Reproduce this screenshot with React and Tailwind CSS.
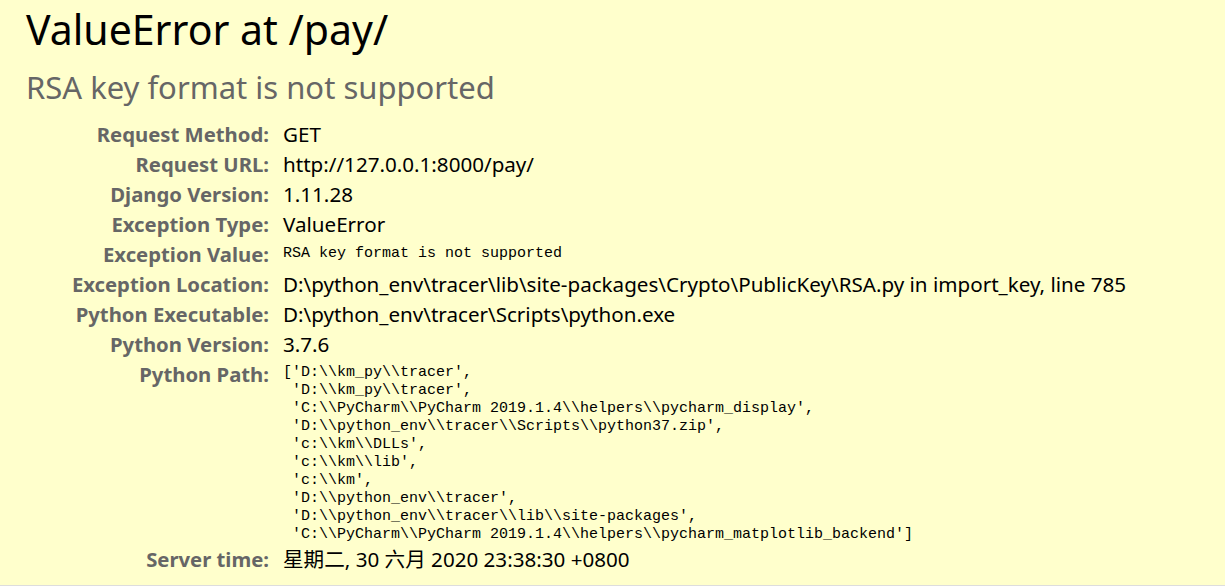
import React from 'react';

const sans = "font-['Noto_Sans','Noto_Sans_CJK_SC',sans-serif]";
const mono = "font-['Liberation_Mono','Noto_Sans_CJK_SC',monospace]";

const meta = [
  ['Request Method:', 'GET'],
  ['Request URL:', 'http://127.0.0.1:8000/pay/'],
  ['Django Version:', '1.11.28'],
  ['Exception Type:', 'ValueError'],
  ['Exception Value:', 'RSA key format is not supported', true],
  ['Exception Location:', 'D:\\python_env\\tracer\\lib\\site-packages\\Crypto\\PublicKey\\RSA.py in import_key, line 785'],
  ['Python Executable:', 'D:\\python_env\\tracer\\Scripts\\python.exe'],
  ['Python Version:', '3.7.6'],
];

const pythonPath = `['D:\\\\km_py\\\\tracer',
 'D:\\\\km_py\\\\tracer',
 'C:\\\\PyCharm\\\\PyCharm 2019.1.4\\\\helpers\\\\pycharm_display',
 'D:\\\\python_env\\\\tracer\\\\Scripts\\\\python37.zip',
 'c:\\\\km\\\\DLLs',
 'c:\\\\km\\\\lib',
 'c:\\\\km',
 'D:\\\\python_env\\\\tracer',
 'D:\\\\python_env\\\\tracer\\\\lib\\\\site-packages',
 'C:\\\\PyCharm\\\\PyCharm 2019.1.4\\\\helpers\\\\pycharm_matplotlib_backend']`;

function MetaRow({ label, children, top }) {
  return (
    <tr className={top ? 'align-top' : 'align-middle'}>
      <th className="w-[283px] pr-[14px] text-right text-[20.3px] font-bold text-[#666] leading-[30px] whitespace-nowrap">
        {label}
      </th>
      <td className="text-[20.6px] leading-[30px] text-black whitespace-nowrap">{children}</td>
    </tr>
  );
}

export default function App() {
  return (
    <div className={`${sans} h-[586px] bg-[#ffffcc] border-b border-[#ddd] px-[26px] pt-[5px]`}>
      <h1 className="text-[41px] font-normal leading-[48px] text-black">ValueError at /pay/</h1>
      <div className="text-[31px] leading-[40px] text-[#666] mt-[14px]">RSA key format is not supported</div>
      <table className="mt-[12px] -ml-[26px] border-collapse">
        <tbody>
          {meta.map(([label, value, isMono]) => (
            <MetaRow key={label} label={label}>
              {isMono ? <div className={`${mono} text-[15px] leading-[30px]`}>{value}</div> : value}
            </MetaRow>
          ))}
          <MetaRow label="Python Path:" top>
            <pre className={`${mono} text-[15px] leading-[18px] pt-[5px]`}>{pythonPath}</pre>
          </MetaRow>
          <MetaRow label="Server time:">星期二, 30 六月 2020 23:38:30 +0800</MetaRow>
        </tbody>
      </table>
    </div>
  );
}
